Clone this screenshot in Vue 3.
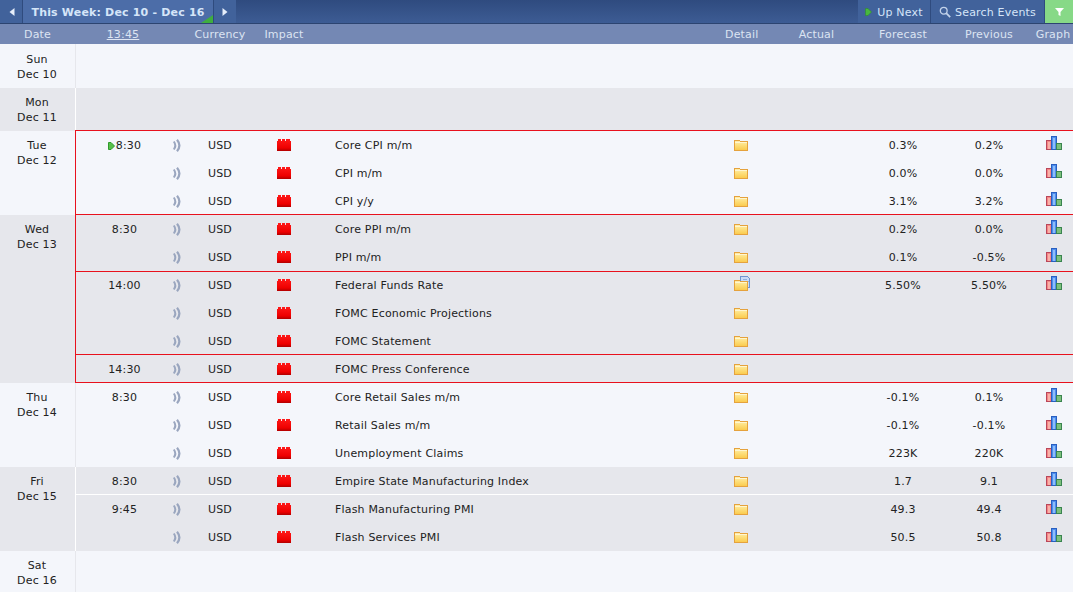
<script setup>
const defaults = { cur: 'USD' }
const r = (time, name, fc, pv, extra = {}) => ({ time, name, fc, pv, graph: true, ...defaults, ...extra })
const days = [
  { l: ['Sun', 'Dec 10'], alt: false, cls: 'first', groups: [] },
  { l: ['Mon', 'Dec 11'], alt: true, groups: [] },
  { l: ['Tue', 'Dec 12'], alt: false, groups: [
    { hl: 'closed', rows: [
      r('8:30', 'Core CPI m/m', '0.3%', '0.2%', { next: true }),
      r('', 'CPI m/m', '0.0%', '0.0%'),
      r('', 'CPI y/y', '3.1%', '3.2%') ] } ] },
  { l: ['Wed', 'Dec 13'], alt: true, groups: [
    { hl: 'open', sep: true, rows: [
      r('8:30', 'Core PPI m/m', '0.2%', '0.0%'),
      r('', 'PPI m/m', '0.1%', '-0.5%') ] },
    { hl: 'flush', rows: [
      r('14:00', 'Federal Funds Rate', '5.50%', '5.50%', { doc: true }),
      r('', 'FOMC Economic Projections', '', '', { graph: false }),
      r('', 'FOMC Statement', '', '', { graph: false }) ] },
    { hl: 'closed', rows: [
      r('14:30', 'FOMC Press Conference', '', '', { graph: false }) ] } ] },
  { l: ['Thu', 'Dec 14'], alt: false, groups: [
    { rows: [
      r('8:30', 'Core Retail Sales m/m', '-0.1%', '0.1%'),
      r('', 'Retail Sales m/m', '-0.1%', '-0.1%'),
      r('', 'Unemployment Claims', '223K', '220K') ] } ] },
  { l: ['Fri', 'Dec 15'], alt: true, groups: [
    { sep: true, rows: [ r('8:30', 'Empire State Manufacturing Index', '1.7', '9.1') ] },
    { rows: [
      r('9:45', 'Flash Manufacturing PMI', '49.3', '49.4'),
      r('', 'Flash Services PMI', '50.5', '50.8') ] } ] },
  { l: ['Sat', 'Dec 16'], alt: false, groups: [] }
]
</script>

<template>
  <div class="page">
    <svg width="0" height="0" class="defs">
      <defs>
        <linearGradient id="imp" x1="0" y1="0" x2="0" y2="1"><stop offset="0" stop-color="#ff1a1a"/><stop offset=".75" stop-color="#ee0000"/><stop offset="1" stop-color="#b00000"/></linearGradient>
        <linearGradient id="fld" x1="0" y1="0" x2="0" y2="1"><stop offset="0" stop-color="#fff0b0"/><stop offset=".45" stop-color="#fde07e"/><stop offset="1" stop-color="#fbc94a"/></linearGradient>
      </defs>
    </svg>
    <div class="toolbar">
      <button class="tb prev"><svg width="6" height="8" viewBox="0 0 6 8"><path d="M5.500 0v8L0.500 4z" fill="#e6eefa"/></svg></button>
      <div class="week">This Week: Dec 10 - Dec 16<i class="corner"></i></div>
      <button class="tb next"><svg width="6" height="8" viewBox="0 0 6 8"><path d="M.5 0v8l5-4z" fill="#e6eefa"/></svg></button>
      <button class="tb upnext">
        <svg width="7" height="8" viewBox="0 0 7 8"><path d="M.5.5h2.500L6.500 4 3 7.500H.5z" fill="#48b83e" stroke="#2e8f2a" stroke-width=".6"/></svg>
        <span>Up Next</span>
      </button>
      <button class="tb search">
        <svg width="12" height="12" viewBox="0 0 12 12" fill="none" stroke="#c3d3ea"><circle cx="4.700" cy="4.700" r="3.400" stroke-width="1.300"/><path d="M7.200 7.200l4 4" stroke-width="1.800"/></svg>
        <span>Search Events</span>
      </button>
      <button class="tb filter"><svg width="9" height="8" viewBox="0 0 9 8"><path d="M0 0h9L5.500 4v4L3.500 7V4z" fill="#fff"/></svg></button>
    </div>

    <div class="head">
      <div class="hd-date">Date</div>
      <div class="cols">
        <div class="hd-clock"><u>13:45</u></div>
        <div></div>
        <div class="c">Currency</div>
        <div class="c">Impact</div>
        <div></div>
        <div class="c">Detail</div>
        <div class="hd-actual">Actual</div>
        <div class="c">Forecast</div>
        <div class="c">Previous</div>
        <div class="hd-graph">Graph</div>
      </div>
    </div>

    <div v-for="d in days" :key="d.l[1]" class="day" :class="[{ alt: d.alt }, d.cls]">
      <div class="date"><div>{{ d.l[0] }}</div><div>{{ d.l[1] }}</div></div>
      <div class="body">
        <div v-for="(g, gi) in d.groups" :key="gi" class="group" :class="{ sep: g.sep }">
          <div v-for="row in g.rows" :key="row.name" class="cols row">
            <div class="c time">
              <svg v-if="row.next" class="play" width="7" height="8" viewBox="0 0 7 8"><path d="M.5.500H3L6.500 4 3 7.500H.5z" fill="#58c04a" stroke="#2f9a2c"/></svg>{{ row.time }}
            </div>
            <div class="ic">
              <svg width="8" height="13" viewBox="0 0 8 13" fill="none" stroke="#9aa6bf"><path d="M.8 2.500Q3.800 6.500 .8 10.500" stroke-width="2"/><path d="M4 .8Q8.800 6.500 4 12.200" stroke-width="2.200"/></svg>
            </div>
            <div class="c">{{ row.cur }}</div>
            <div class="ic">
              <svg width="14" height="12" viewBox="0 0 14 12" shape-rendering="crispEdges"><path d="M0 12V2h1V0h3v2h1V0h3v2h1V0h4v2h1v10z" fill="url(#imp)"/></svg>
            </div>
            <div class="event">{{ row.name }}</div>
            <div class="ic detail">
              <svg width="17" height="15" viewBox="0 0 17 15" shape-rendering="crispEdges">
                <template v-if="row.doc">
                  <path d="M6.500.5h7l2 2v9h-9z" fill="#c9dcf8" stroke="#6f95d0"/>
                  <path d="M9 3h4v1H9zM14 5h1v1h-1z" fill="#8fb0e0"/>
                </template>
                <path d="M.5 14.500v-10h5l1 1h7v9z" fill="url(#fld)" stroke="#e5a23d"/>
                <path d="M1 6h12v1H1z" fill="#fff6cf"/>
              </svg>
            </div>
            <div></div>
            <div class="c">{{ row.fc }}</div>
            <div class="c">{{ row.pv }}</div>
            <div class="ic graph">
              <svg v-if="row.graph" width="16" height="14" viewBox="0 0 16 14" shape-rendering="crispEdges">
                <rect x=".5" y="4.500" width="5" height="9" fill="#f58585" stroke="#b9475a"/>
                <rect x="1.500" y="5.500" width="2" height="7" fill="#f9b0a8"/>
                <rect x="5.500" y=".5" width="5" height="13" fill="#4d8eef" stroke="#2a5fc0"/>
                <rect x="7" y="1.500" width="2" height="11" fill="#8fbdf8"/>
                <rect x="10.500" y="7.500" width="5" height="6" fill="#7cc07c" stroke="#3a8450"/>
              </svg>
            </div>
          </div>
          <div v-if="g.hl" class="hl" :class="g.hl"></div>
        </div>
      </div>
    </div>
  </div>
</template>

<style>
html, body { margin: 0; background: #f4f6fb; overflow: hidden; }
</style>

<style scoped>
.defs { position: absolute; }
.page {
  width: 1073px;
  height: 592px;
  overflow: hidden;
  font: 11px/15px "DejaVu Sans", Verdana, sans-serif;
  letter-spacing: .18px;
  color: #222;
}
.toolbar {
  display: flex;
  height: 23px;
  border-bottom: 1px solid #2c4470;
  background: linear-gradient(180deg, #2f4b7f, #3d5c94);
}
.tb {
  display: flex;
  align-items: center;
  justify-content: center;
  gap: 5px;
  padding: 1px 0 0;
  border: 0;
  background: #41629b;
  color: #d5e5f8;
  font: inherit;
  letter-spacing: inherit;
}
.prev { width: 23px; border-right: 1px solid #2f4b7e; padding-left: 2px; }
.next { width: 23px; border-left: 1px solid #2f4b7e; }
.week {
  position: relative;
  width: 190px;
  height: 23px;
  background: #4c6da8;
  color: #d5e5f8;
  font-weight: bold;
  line-height: 25px;
  text-align: center;
  white-space: nowrap;
}
.corner {
  position: absolute;
  right: 0;
  bottom: 0;
  border-left: 12px solid transparent;
  border-bottom: 8px solid #3fae3f;
}
.upnext { margin-left: 622px; width: 73px; border-right: 1px solid #2f4b7e; }
.search { width: 114px; border-right: 1px solid #2f4b7e; gap: 4px; }
.filter { width: 28px; background: #87d987; }
.head {
  display: flex;
  height: 20px;
  background: #7488b4;
  color: #dce4f2;
  line-height: 22px;
}
.hd-date { width: 76px; padding-right: 1px; box-sizing: border-box; text-align: center; }
.hd-clock { padding-right: 3px; text-align: center; }
.hd-actual { padding-left: 17px; text-align: center; }
.hd-graph { padding-left: 2px; text-align: center; }
.cols {
  display: grid;
  flex: 1;
  grid-template-columns: 97px 8px 78px 50px 416px 32px 102px 88px 84px 42px;
  grid-template-rows: 20px;
  white-space: nowrap;
}
.c { text-align: center; }
.day { display: flex; background: #f4f6fb; min-height: 43px; }
.day.first { min-height: 44px; }
.day.first .date { padding-top: 8px; }
.day.alt { background: #e6e7ec; }
.date {
  width: 75px;
  padding: 7px 1px 0 0;
  box-sizing: border-box;
  text-align: center;
  flex: none;
}
.body { flex: 1; border-left: 1px solid #e6e7ec; }
.alt .body { border-left-color: #fff; }
.group { position: relative; }
.row { height: 28px; line-height: 30px; grid-template-rows: 28px; }
.group.sep .row:last-of-type { height: 28px; box-shadow: inset 0 -1px #fff; }
.ic { display: flex; align-items: center; justify-content: center; }
.event { padding-left: 26px; }
.play { margin-right: 1px; vertical-align: -1px; }
.detail { justify-content: flex-start; align-items: flex-start; padding: 5px 0 0 9px; }
.graph { align-items: flex-start; padding: 5px 0 0 4px; }
.hl {
  position: absolute;
  left: -1px;
  right: 0;
  top: -1px;
  bottom: 0;
  border-top: 1px solid #e8111d;
  border-left: 1px solid #e8111d;
  pointer-events: none;
}
.hl.flush { top: 0; }
.hl.closed { border-bottom: 1px solid #e8111d; }
</style>
